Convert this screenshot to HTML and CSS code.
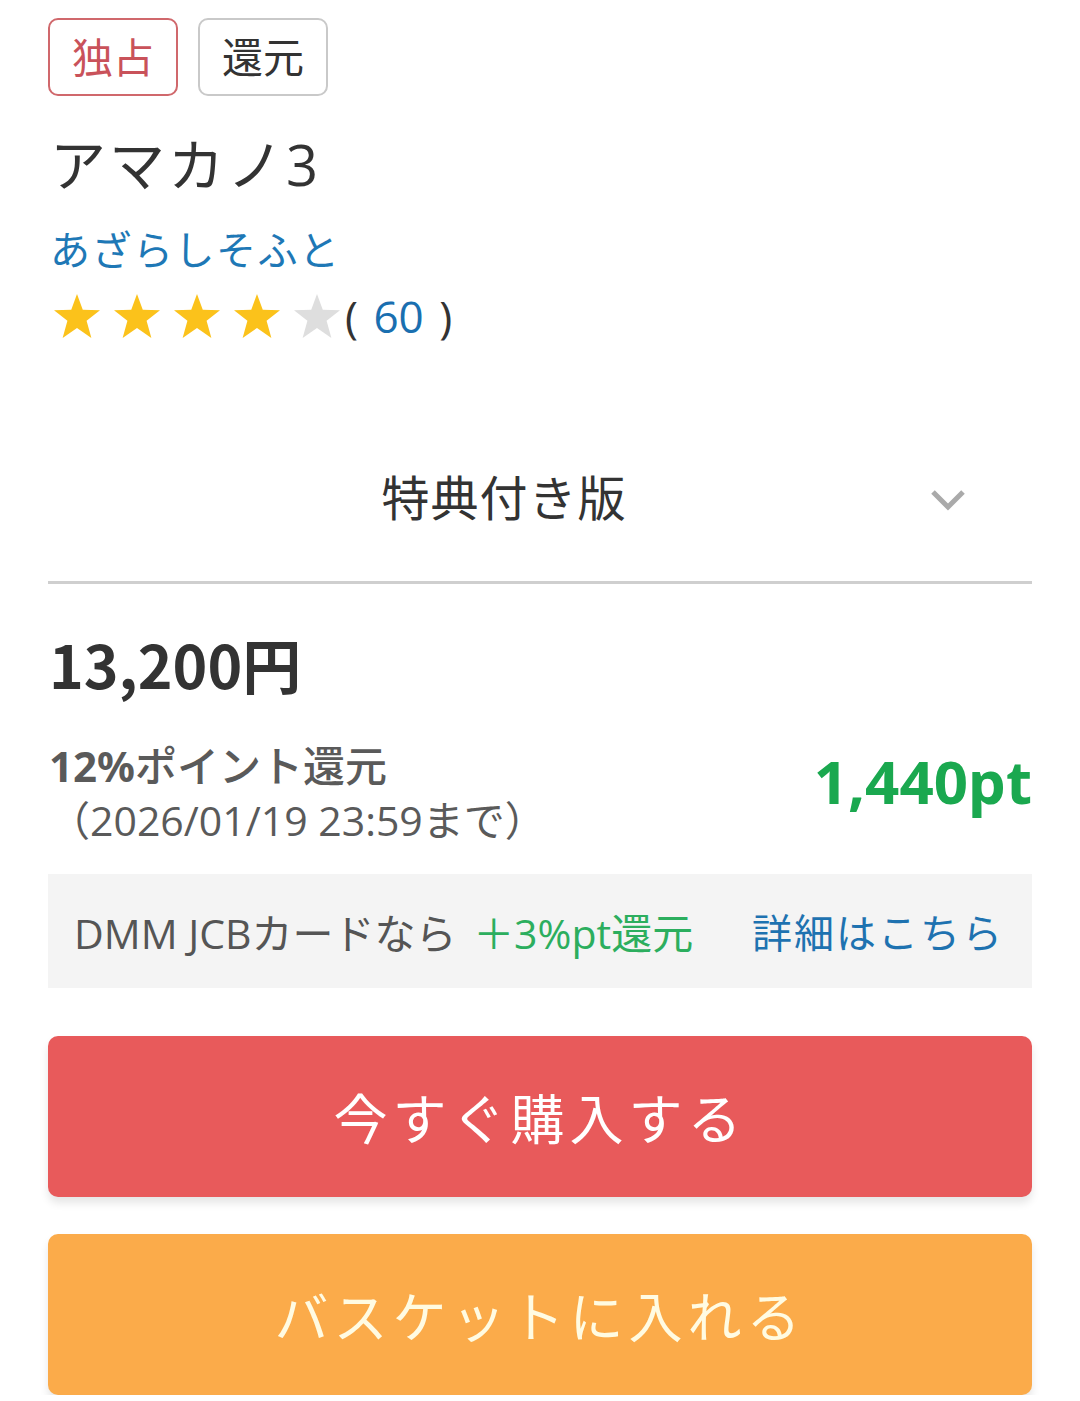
FILE: index.html
```html
<!DOCTYPE html>
<html lang="ja">
<head>
<meta charset="utf-8">
<title>アマカノ3</title>
<link rel="stylesheet" href="styles.css">
</head>
<body>
<main class="page">
  <div class="badges">
    <span class="badge badge-red">独占</span>
    <span class="badge badge-gray">還元</span>
  </div>
  <h1 class="title">アマカノ3</h1>
  <a class="author">あざらしそふと</a>
  <div class="rating">
    <span class="stars">
      <svg class="star on" viewBox="0 0 50 48"><polygon points="25,1 31,17.5 49,18 35,29 40,47 25,36.5 10,47 15,29 1,18 19,17.5"/></svg>
      <svg class="star on" viewBox="0 0 50 48"><polygon points="25,1 31,17.5 49,18 35,29 40,47 25,36.5 10,47 15,29 1,18 19,17.5"/></svg>
      <svg class="star on" viewBox="0 0 50 48"><polygon points="25,1 31,17.5 49,18 35,29 40,47 25,36.5 10,47 15,29 1,18 19,17.5"/></svg>
      <svg class="star on" viewBox="0 0 50 48"><polygon points="25,1 31,17.5 49,18 35,29 40,47 25,36.5 10,47 15,29 1,18 19,17.5"/></svg>
      <svg class="star off" viewBox="0 0 50 48"><polygon points="25,1 31,17.5 49,18 35,29 40,47 25,36.5 10,47 15,29 1,18 19,17.5"/></svg>
    </span>
    <span class="count">( <span class="count-num">60</span> )</span>
  </div>
  <div class="variant">
    <span class="variant-label">特典付き版</span>
    <svg class="chevron" viewBox="0 0 36 22"><polyline points="3,3 18,18 33,3"/></svg>
  </div>
  <div class="price">13,200円</div>
  <div class="points">
    <div class="points-left">
      <div class="points-rate"><span class="rate-num">12%</span>ポイント還元</div>
      <div class="points-until">（2026/01/19 23:59まで）</div>
    </div>
    <div class="points-value">1,440pt</div>
  </div>
  <div class="card-promo">
    <span class="promo-text">DMM JCBカードなら <span class="promo-green">＋3%pt還元</span></span>
    <a class="promo-link">詳細はこちら</a>
  </div>
  <button class="btn btn-buy">今すぐ購入する</button>
  <button class="btn btn-basket">バスケットに入れる</button>
</main>
</body>
</html>
```
FILE: styles.css
```css
* { box-sizing: border-box; }
html, body { margin: 0; padding: 0; background: #fff; }
body {
  font-family: "Open Sans", "Noto Sans CJK JP", "Noto Sans", sans-serif;
  color: #333;
}
.page {
  width: 1080px;
  padding: 18px 48px 0 48px;
}
.badges {
  display: flex;
  gap: 20px;
}
.badge {
  width: 130px;
  height: 78px;
  border: 2px solid #ccc;
  border-radius: 10px;
  display: flex;
  align-items: center;
  justify-content: center;
  font-size: 41px;
  line-height: 1;
}
.badge-red { border-color: #d0686c; color: #c9525a; }
.badge-gray { border-color: #c9c9c9; color: #333; }

.title {
  margin: 30px 0 0 2px;
  font-size: 56px;
  font-weight: 400;
  line-height: 76px;
  letter-spacing: 3px;
  color: #333;
}
.author {
  display: block;
  margin: 20px 0 0 2px;
  font-size: 40px;
  line-height: 56px;
  color: #1e78b6;
  letter-spacing: 1.5px;
}
.rating {
  margin-top: 8px;
  height: 60px;
  display: flex;
  align-items: center;
}
.stars { display: flex; gap: 12px; margin-left: 5px; }
.star { width: 48px; height: 46px; }
.star.on polygon { fill: #fbc21b; }
.star.off polygon { fill: #dedede; }
.count {
  font-size: 44px;
  line-height: 60px;
  color: #333;
  margin-left: 4px;
  word-spacing: 4px;
}
.count-num { color: #1a6fb0; }

.variant {
  margin-top: 122px;
  padding-bottom: 53px;
  border-bottom: 3px solid #cfcfcf;
  display: flex;
  align-items: center;
}
.variant-label {
  flex: 1;
  text-align: center;
  padding-left: 30px;
  font-size: 48px;
  line-height: 60px;
  color: #333;
  letter-spacing: 1px;
}
.chevron {
  width: 36px;
  height: 22px;
  margin-right: 66px;
  margin-top: 4px;
}
.chevron polyline {
  fill: none;
  stroke: #aaa;
  stroke-width: 5;
}

.price {
  margin: 45px 0 0 1px;
  font-family: "Noto Sans CJK JP", "Noto Sans", sans-serif;
  font-size: 59px;
  font-weight: 700;
  line-height: 70px;
  color: #333;
}
.points {
  margin-top: 40px;
  display: flex;
  justify-content: space-between;
  align-items: flex-start;
}
.points-left { color: #5a5a5a; padding-left: 1px; }
.points-rate {
  font-size: 42px;
  line-height: 54px;
  font-weight: 500;
  color: #5a5a5a;
}
.rate-num { font-weight: 700; font-family: "Noto Sans", sans-serif; }
.points-until {
  font-size: 41px;
  line-height: 54px;
  color: #5a5a5a;
}
.points-value {
  margin-top: 10px;
  font-family: "Noto Sans", "Noto Sans CJK JP", sans-serif;
  font-size: 60px;
  font-weight: 700;
  line-height: 64px;
  color: #1aa84f;
}

.card-promo {
  margin-top: 27px;
  height: 114px;
  background: #f4f4f4;
  display: flex;
  align-items: center;
  justify-content: space-between;
  padding: 0 28px 0 26px;
}
.promo-text { color: #555; font-size: 41px; }
.promo-green { color: #2cae5e; margin-left: 6px; }
.promo-link { color: #1e72b0; letter-spacing: 2px; font-size: 40px; }

.btn {
  display: block;
  width: 100%;
  height: 161px;
  border: none;
  border-radius: 10px;
  font-family: "Noto Sans CJK JP", "Noto Sans", sans-serif;
  font-size: 54px;
  letter-spacing: 5px;
  box-shadow: 0 6px 8px rgba(0, 0, 0, 0.10);
}
.btn-buy {
  margin-top: 48px;
  background: #e85a5b;
  color: #fff;
}
.btn-basket {
  margin-top: 37px;
  background: #fbab4a;
  color: #fffbe2;
}
```
